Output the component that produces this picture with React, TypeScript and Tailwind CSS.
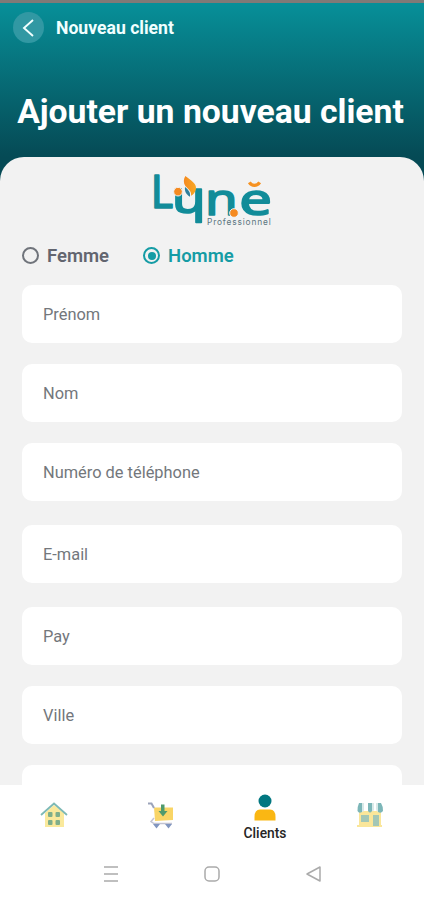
const fields = [
     { label: "Prénom", gap: "mt-0" },
     { label: "Nom", gap: "mt-[21px]" },
     { label: "Numéro de téléphone", gap: "mt-[21px]" },
     { label: "E-mail", gap: "mt-6" },
     { label: "Pay", gap: "mt-6" },
     { label: "Ville", gap: "mt-[21px]" },
     { label: "", gap: "mt-[21px]" },
]

function Logo() {
     return (
          <svg width="135" height="65" viewBox="0 0 405 195" className="mx-auto overflow-visible">
               <defs>
                    <linearGradient id="flame" x1="0" y1="0" x2="1" y2="0">
                         <stop offset="0" stopColor="#f58a20" />
                         <stop offset="1" stopColor="#f8a823" />
                    </linearGradient>
               </defs>
               <g fontFamily="Noto Sans, sans-serif" fontWeight="400" fontSize="129" fill="#128c99" stroke="#128c99" strokeWidth="5" strokeLinejoin="round">
                    <text x="17" y="119" fontSize="134" textLength="67" lengthAdjust="spacingAndGlyphs">L</text>
                    <text x="80" y="135" textLength="102" lengthAdjust="spacingAndGlyphs">ɥ</text>
                    <text x="180" y="142" textLength="98" lengthAdjust="spacingAndGlyphs">n</text>
                    <text x="283" y="142" textLength="98" lengthAdjust="spacingAndGlyphs">e</text>
               </g>
               <path d="M121 24C137 37 155 46 153 62C151 74 145 79 138 83C141 70 129 63 121 54C115 45 115 34 121 24Z" fill="url(#flame)" />
               <path d="M120 57C130 66 137 72 135 86C125 81 118 71 120 57Z" fill="#2f7f9c" />
               <circle cx="99" cy="71" r="13" fill="#f58a20" stroke="#f2f2f2" strokeWidth="3" />
               <circle cx="267" cy="135" r="13" fill="#f58a20" stroke="#f2f2f2" strokeWidth="3" />
               <path d="M313 43Q319 52 328 52Q338 52 344 43" fill="none" stroke="#f69222" strokeWidth="10" />
               <text x="186" y="170" fontFamily="Inter, sans-serif" fontSize="25" fill="#5b7580" textLength="191">Professionnel</text>
          </svg>
     )
}

function HomeIcon() {
     return (
          <svg width="28" height="28" viewBox="0 0 28 28">
               <path d="M5 12L14 4L24 12V26H5Z" fill="#fae99c" />
               <path d="M1 14L14 2.5L27 14" fill="none" stroke="#7db9b5" strokeWidth="1.8" />
               <g fill="#7fae8b">
                    <rect x="8" y="11" width="4.5" height="5" rx="1" />
                    <rect x="15.5" y="11" width="4.5" height="5" rx="1" />
                    <rect x="8" y="19" width="4.5" height="5" rx="1" />
                    <rect x="15.5" y="19" width="4.5" height="5" rx="1" />
               </g>
          </svg>
     )
}

function CartIcon() {
     return (
          <svg width="28" height="28" viewBox="0 0 28 28">
               <path d="M7 6.5H26V19L8 20Z" fill="#f9d566" />
               <path d="M1 2.5H4.5L7 7" fill="none" stroke="#9ba3ba" strokeWidth="2" />
               <path d="M7 17L4 20.5L7 22.5H25" fill="none" stroke="#c3c4d1" strokeWidth="1.5" />
               <path d="M14 3.5H17.5V10H20.5L16 15.5L11.5 10H14Z" fill="#4f9a6d" />
               <path d="M6 23H13L9.5 27.5ZM18 23H25L21.5 27.5Z" fill="#8196c0" />
          </svg>
     )
}

function ClientIcon() {
     return (
          <svg width="24" height="28" viewBox="0 0 24 28">
               <circle cx="12" cy="7" r="6.5" fill="#027780" />
               <path d="M1.5 26.5V23Q1.5 15.500 7 15.500H17Q22.500 15.500 22.500 23V26.5Z" fill="#fab713" />
          </svg>
     )
}

function ShopIcon() {
     return (
          <svg width="28" height="28" viewBox="0 0 28 28">
               <path d="M3 10H25V24H26V26H1V24H3Z" fill="#fae69a" />
               <path d="M3 2H6V11Q3 13 1.500 10Q1.500 5 3 2ZM12 2H16V10Q14 13 12 10ZM22 2H25Q27 5 27 10Q25 13 22 11Z" fill="#7cb6b8" />
               <path d="M6 2H8V9Q8 11 6 11ZM16 2H18V9Q17 11 16 10ZM20 2H22V11Q20 10 20 8Z" fill="#d9e9e8" />
               <rect x="5" y="14" width="8" height="7" fill="#a3c7b6" />
               <rect x="17" y="14" width="6" height="11" fill="#a3c7b6" />
          </svg>
     )
}

export default function App() {
     return (
          <div className="flex h-[900px] w-[424px] flex-col overflow-hidden bg-white font-['Roboto',sans-serif]">
               <header className="h-[157px] shrink-0 bg-linear-to-b from-[#07919a] to-[#054a55]">
                    <div className="h-[3px] bg-[#807a77]" />
                    <div className="flex h-[49px] items-center pl-[13px]">
                         <button className="flex size-[31px] items-center justify-center rounded-full bg-[#3198a3]">
                              <svg width="14" height="18" viewBox="0 0 14 18" fill="none" stroke="#f1ffff" strokeWidth="1.9">
                                   <path d="M11 1L2 9L11 17" />
                              </svg>
                         </button>
                         <span className="ml-3 pt-[2px] text-[17.6px] font-bold text-[#f0ffff]">Nouveau client</span>
                    </div>
                    <h1 className="mt-[38px] -ml-[3px] text-center text-[33.7px] leading-[44px] font-bold whitespace-nowrap text-white">Ajouter un nouveau client</h1>
               </header>
               <div className="h-[628px] shrink-0 bg-[#054a55]">
                    <main className="h-full overflow-hidden rounded-t-[24px] bg-[#f2f2f2] px-[22px] pt-[11px]">
                         <Logo />
                         <div className="flex h-[52px] items-center pb-[7px] text-[18.5px] font-semibold">
                              <label className="flex items-center gap-2 text-[#62656f]">
                                   <span className="size-[17px] rounded-full border-2 border-[#70747b]" />
                                   <span className="pt-[2px]">Femme</span>
                              </label>
                              <label className="ml-[34px] flex items-center gap-2 text-[#159ca5]">
                                   <span className="flex size-[17px] items-center justify-center rounded-full border-2 border-[#159ca5]">
                                        <span className="size-[8px] rounded-full bg-[#159ca5]" />
                                   </span>
                                   <span className="pt-[2px]">Homme</span>
                              </label>
                         </div>
                         {fields.map((field, i) => (
                              <div key={i} className={`flex h-[58px] items-center rounded-[10px] bg-white pt-[2px] pl-[21px] text-[16.4px] text-[#73777c] ${field.gap}`}>
                                   {field.label}
                              </div>
                         ))}
                    </main>
               </div>
               <nav className="flex h-[62px] shrink-0 bg-white">
                    <div className="flex w-[107px] justify-center pt-4"><HomeIcon /></div>
                    <div className="flex w-[107px] justify-center pt-4"><CartIcon /></div>
                    <div className="flex w-[102px] flex-col items-center gap-px pt-[9px] text-[13.8px] leading-5 font-medium text-[#252525]">
                         <ClientIcon />
                         Clients
                    </div>
                    <div className="flex w-[108px] justify-center pt-4"><ShopIcon /></div>
               </nav>
               <div className="flex h-[55px] items-center pl-[103px]">
                    <svg width="220" height="20" viewBox="0 0 220 20" fill="none" stroke="#aaaaaa" strokeWidth="1.5">
                         <path d="M1 3H15M1 10H15M1 17H15" />
                         <rect x="102" y="3" width="14" height="14" rx="4" />
                         <path d="M217 3V17L204 10Z" strokeLinejoin="round" />
                    </svg>
               </div>
          </div>
     )
}
